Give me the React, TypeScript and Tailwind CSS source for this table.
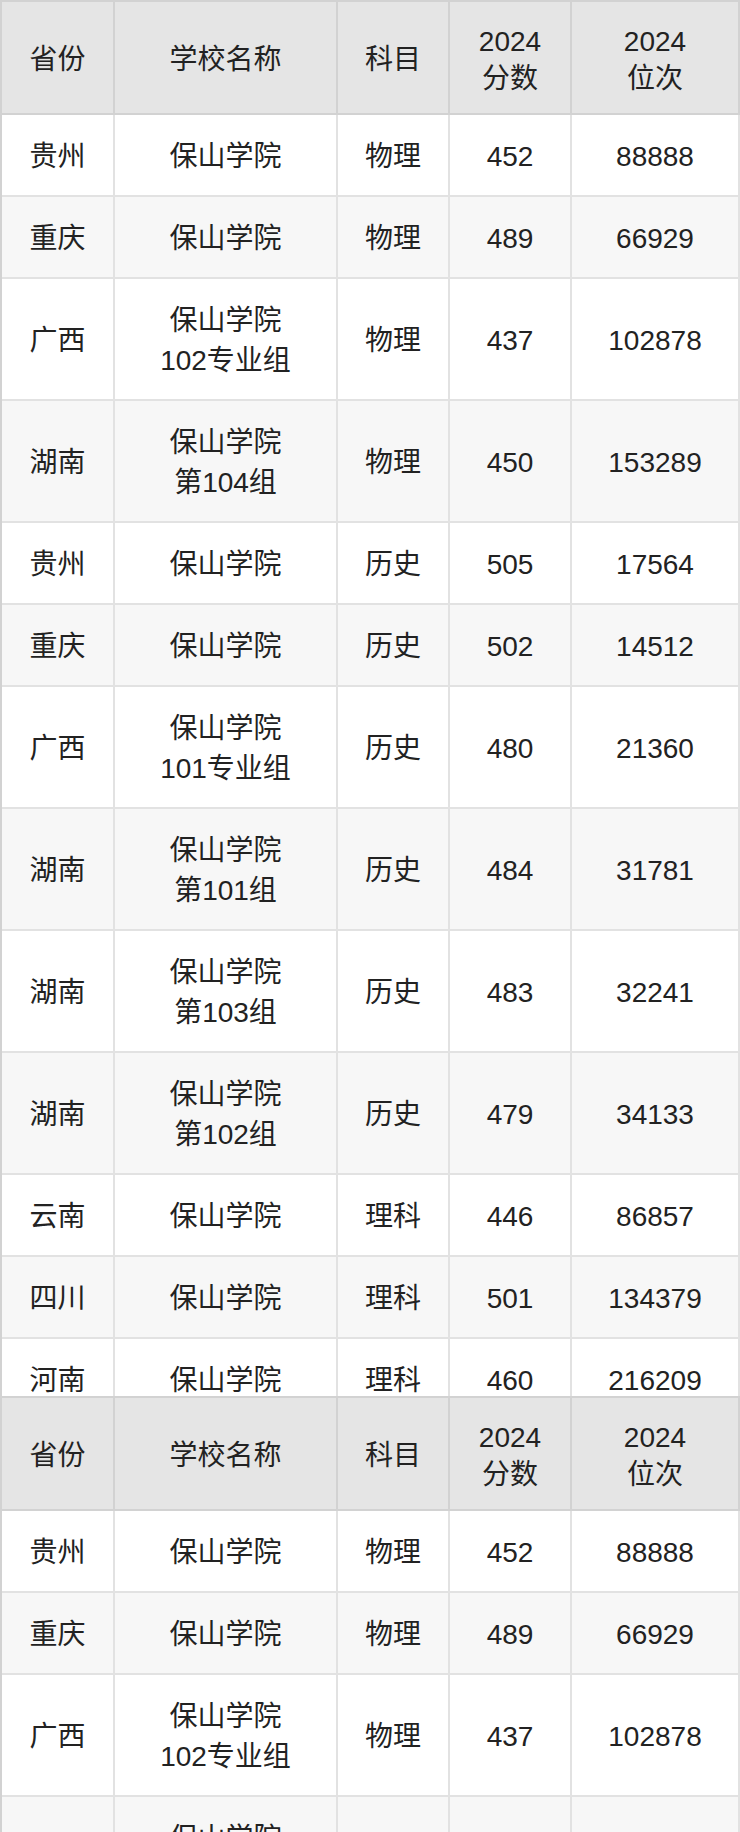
import React from "react";

type Row = {
  province: string;
  school: string[];
  subject: string;
  score: string;
  rank: string;
};

const rows: Row[] = [
  { province: "贵州", school: ["保山学院"], subject: "物理", score: "452", rank: "88888" },
  { province: "重庆", school: ["保山学院"], subject: "物理", score: "489", rank: "66929" },
  { province: "广西", school: ["保山学院", "102专业组"], subject: "物理", score: "437", rank: "102878" },
  { province: "湖南", school: ["保山学院", "第104组"], subject: "物理", score: "450", rank: "153289" },
  { province: "贵州", school: ["保山学院"], subject: "历史", score: "505", rank: "17564" },
  { province: "重庆", school: ["保山学院"], subject: "历史", score: "502", rank: "14512" },
  { province: "广西", school: ["保山学院", "101专业组"], subject: "历史", score: "480", rank: "21360" },
  { province: "湖南", school: ["保山学院", "第101组"], subject: "历史", score: "484", rank: "31781" },
  { province: "湖南", school: ["保山学院", "第103组"], subject: "历史", score: "483", rank: "32241" },
  { province: "湖南", school: ["保山学院", "第102组"], subject: "历史", score: "479", rank: "34133" },
  { province: "云南", school: ["保山学院"], subject: "理科", score: "446", rank: "86857" },
  { province: "四川", school: ["保山学院"], subject: "理科", score: "501", rank: "134379" },
  { province: "河南", school: ["保山学院"], subject: "理科", score: "460", rank: "216209" },
];

const headers: string[][] = [["省份"], ["学校名称"], ["科目"], ["2024", "分数"], ["2024", "位次"]];

// the page shows the same table twice, each clipped to a fixed height
function ScoreTable({ height }: { height: string }) {
  return (
    <div className={`${height} overflow-hidden`}>
      <div className="grid grid-cols-[113px_223px_112px_122px_168px] border-l-2 border-t-2 border-[#d2d2d2]">
        {headers.map((h, i) => (
          <div
            key={i}
            className="flex h-[113px] flex-col items-center justify-center border-b-2 border-r-2 border-[#d2d2d2] bg-[#e5e5e5] pt-1 text-center leading-[37px]"
          >
            {h.map((line) => (
              <span key={line}>{line}</span>
            ))}
          </div>
        ))}
        {rows.map((row, idx) => {
          const bg = idx % 2 === 1 ? "bg-[#f7f7f7]" : "bg-white";
          const cell = `flex flex-col items-center justify-center border-b-2 border-r-2 border-[#e2e2e2] pt-[22px] pb-[18px] text-center leading-10 ${bg}`;
          return (
            <React.Fragment key={idx}>
              <div className={cell}>{row.province}</div>
              <div className={cell}>
                {row.school.map((line) => (
                  <span key={line}>{line}</span>
                ))}
              </div>
              <div className={cell}>{row.subject}</div>
              <div className={cell}>{row.score}</div>
              <div className={cell}>{row.rank}</div>
            </React.Fragment>
          );
        })}
      </div>
    </div>
  );
}

export default function App() {
  return (
    <div
      className="w-[740px] bg-white text-[28px] text-[#222222]"
      style={{ fontFamily: '"Liberation Sans", "Noto Sans CJK SC", sans-serif' }}
    >
      <ScoreTable height="h-[1396px]" />
      <ScoreTable height="h-[436px]" />
    </div>
  );
}
